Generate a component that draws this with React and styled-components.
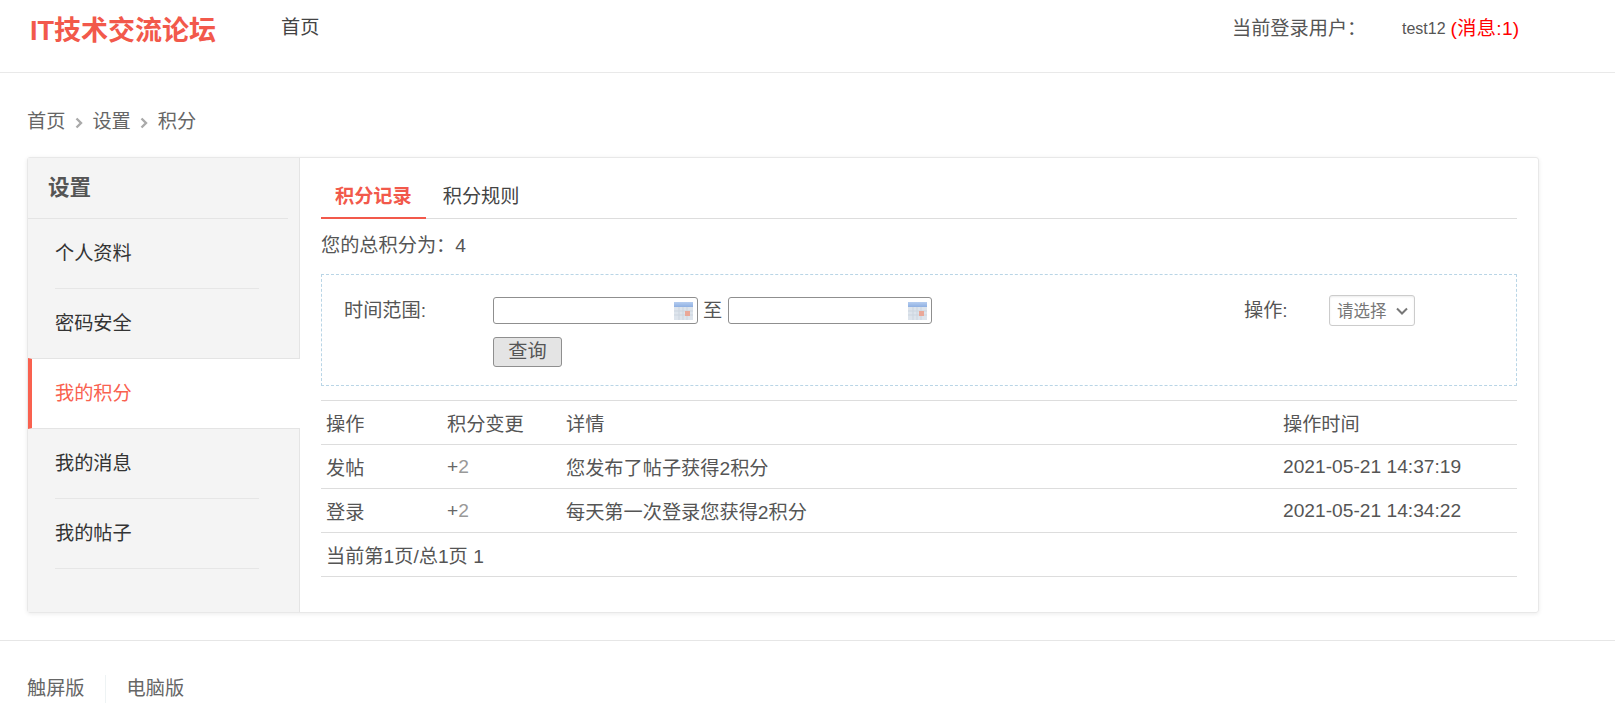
import React from 'react';
import styled, { createGlobalStyle } from 'styled-components';

const FONT = '"Liberation Sans", "Noto Sans CJK SC", sans-serif';
const RED = '#f2594b';

const Global = createGlobalStyle`
  html, body { margin: 0; padding: 0; background: #fff; overflow: hidden; }
  body { font-family: ${FONT}; font-size: 19.2px; color: #555; }
  * { box-sizing: border-box; }
`;

const S = {
  Header: styled.header`
    height: 73px;
    border-bottom: 1px solid #e9e9e9;
    display: flex;
    align-items: flex-start;
  `,
  Logo: styled.div`
    width: 281px;
    padding: 15px 0 0 30px;
    font-size: 27px;
    line-height: 32px;
    font-weight: 700;
    color: ${RED};
  `,
  Nav: styled.a`
    flex: 1;
    padding-top: 14px;
    font-size: 19.2px;
    line-height: 28px;
    color: #444;
  `,
  User: styled.div`
    width: 383px;
    padding-top: 15px;
    display: flex;
    line-height: 28px;
    font-size: 19.2px;
  `,
  UserLabel: styled.span`
    width: 170px;
  `,
  UserName: styled.span`
    font-size: 16px;
    margin-right: 5px;
  `,
  Message: styled.span`
    color: #f00;
    font-size: 19.2px;
    letter-spacing: 0.3px;
  `,
  Main: styled.main`
    padding: 0 76px 0 27px;
  `,
  Crumbs: styled.nav`
    height: 84px;
    padding-top: 35px;
    display: flex;
    align-items: flex-start;
    gap: 9.5px;
    line-height: 28px;
    color: #666;
  `,
  CrumbArrow: styled.svg`
    width: 8px;
    height: 12px;
    margin-top: 9px;
    fill: none;
    stroke: #aaa;
    stroke-width: 2.4;
  `,
  Card: styled.section`
    height: 456px;
    display: flex;
    border: 1px solid #e8e8e8;
    border-radius: 3px;
    box-shadow: 0 1px 4px rgba(0, 0, 0, 0.08);
  `,
  Side: styled.aside`
    width: 272px;
    flex: none;
    background: #f4f4f4;
    border-right: 1px solid #e4e4e4;
  `,
  SideTitle: styled.h3`
    margin: 0;
    width: 260px;
    height: 61px;
    padding-left: 20px;
    border-bottom: 1px solid #e4e4e4;
    font-size: 21.5px;
    font-weight: 700;
    line-height: 61px;
    color: #555;
  `,
  SideItem: styled.a`
    display: block;
    height: ${p => (p.$active ? '71px' : '70px')};
    margin-top: ${p => (p.$active ? '-1px' : 0)};
    margin-right: ${p => (p.$active ? '-1px' : 0)};
    padding-left: ${p => (p.$active ? '23px' : '27px')};
    background: ${p => (p.$active ? '#fff' : 'transparent')};
    border-left: ${p => (p.$active ? `4px solid #f9614f` : 0)};
    border-top: ${p => (p.$active ? '1px solid #e4e4e4' : 0)};
    border-bottom: ${p => (p.$active ? '1px solid #e4e4e4' : 0)};
    line-height: 69px;
    color: ${p => (p.$active ? '#f9614f' : '#333')};
    position: relative;
  `,
  SideLine: styled.div`
    margin-left: 27px;
    width: 204px;
    height: 1px;
    margin-top: -1px;
    background: ${p => (p.$hidden ? 'transparent' : '#e6e6e6')};
    position: relative;
  `,
  Content: styled.div`
    flex: 1;
    padding: 0 21px;
  `,
  Tabs: styled.div`
    height: 61px;
    display: flex;
    align-items: flex-end;
    border-bottom: 1px solid #ddd;
  `,
  Tab: styled.a`
    height: 61px;
    margin-bottom: -1px;
    padding: 22px ${p => (p.$active ? '14px' : '17px')} 0;
    line-height: 34px;
    font-weight: ${p => (p.$active ? 700 : 400)};
    font-size: 19.2px;
    color: ${p => (p.$active ? RED : '#444')};
    border-bottom: ${p => (p.$active ? `2px solid ${RED}` : 0)};
  `,
  Total: styled.p`
    margin: 0;
    height: 55px;
    line-height: 54px;
  `,
  Filter: styled.form`
    height: 112px;
    padding: 20px 22px;
    border: 1px dashed #b9d5e6;
    display: grid;
    grid-template-columns: 149px 751px 85px 1fr;
    grid-auto-rows: min-content;
    row-gap: 11px;
    align-items: center;
    line-height: 28px;
  `,
  Dates: styled.div`
    display: flex;
    align-items: center;
    gap: 5.5px;
  `,
  DateField: styled.div`
    width: 204.5px;
    height: 27px;
    display: flex;
    align-items: center;
    padding-right: 4px;
    border: 1px solid #8f8f8f;
    border-radius: 3px;
    background: #fff;
  `,
  DateInput: styled.input`
    flex: 1;
    min-width: 0;
    height: 100%;
    border: 0;
    outline: 0;
    background: transparent;
  `,
  Calendar: styled.svg`
    width: 19px;
    height: 20px;
    flex: none;
  `,
  Select: styled.div`
    width: 86px;
    height: 31px;
    display: flex;
    align-items: center;
    justify-content: space-between;
    padding: 0 6px 0 7px;
    border: 1px solid #ccc;
    border-radius: 3px;
    background: #fff;
    box-shadow: inset 0 1px 2px rgba(0, 0, 0, 0.08);
    font-size: 16.5px;
    color: #777;
  `,
  SelectArrow: styled.svg`
    width: 12px;
    height: 8px;
    fill: none;
    stroke: #777;
    stroke-width: 2;
  `,
  Query: styled.button`
    display: block;
    width: 69px;
    height: 30px;
    padding: 0;
    border: 1px solid #8f8f8f;
    border-radius: 3px;
    background: #e4e4e4;
    font: inherit;
    color: #555;
    line-height: 28px;
  `,
  Table: styled.table`
    width: 100%;
    margin-top: 14px;
    border-collapse: collapse;
    table-layout: fixed;
    border-top: 1px solid #ddd;
  `,
  Row: styled.tr`
    height: 44px;
    border-bottom: 1px solid #ddd;
  `,
  Col: styled.col`
    width: ${p => p.$w}px;
  `,
  Cell: styled.td`
    padding: 0 0 0 ${p => (p.$first ? '5px' : '6px')};
    font-size: 19.2px;
    font-weight: 400;
    text-align: left;
    white-space: nowrap;
  `,
  Plus: styled.span`
    color: #666;
  `,
  Two: styled.span`
    color: #999;
  `,
  Footer: styled.footer`
    margin-top: 27px;
    height: 64px;
    padding: 34px 0 0 27px;
    border-top: 1px solid #e6e6e6;
    display: flex;
    align-items: flex-start;
    line-height: 28px;
    color: #666;
  `,
  FootLink: styled.a`
    padding-right: ${p => (p.$first ? '20px' : 0)};
    margin-right: ${p => (p.$first ? '21px' : 0)};
    border-right: ${p => (p.$first ? '1px solid #eef3f4' : 0)};
  `,
};

const Arrow = () => (
  <S.CrumbArrow viewBox="0 0 8 12">
    <path d="M1.5 1.5 6 6l-4.5 4.5" />
  </S.CrumbArrow>
);

const CalendarIcon = () => (
  <S.Calendar viewBox="0 0 19 20">
    <defs>
      <linearGradient id="calHead" x1="0" y1="0" x2="0" y2="1">
        <stop offset="0" stopColor="#b5cdf0" />
        <stop offset="1" stopColor="#8fb0e2" />
      </linearGradient>
    </defs>
    <rect x="0" y="1" width="19" height="18" fill="#dde4ec" />
    <rect x="0" y="1" width="19" height="5" fill="url(#calHead)" />
    <path d="M5 6v13M9 6v13M13 6v13M0 10h19M0 14h19" stroke="#ccd5df" strokeWidth="1" />
    <rect x="11" y="10" width="5" height="5" fill="#eaa898" />
  </S.Calendar>
);

const menu = ['个人资料', '密码安全', '我的积分', '我的消息', '我的帖子'];

const rows = [
  ['发帖', '您发布了帖子获得2积分', '2021-05-21 14:37:19'],
  ['登录', '每天第一次登录您获得2积分', '2021-05-21 14:34:22'],
];

const App = () => (
  <>
    <Global />
    <S.Header>
      <S.Logo>IT技术交流论坛</S.Logo>
      <S.Nav>首页</S.Nav>
      <S.User>
        <S.UserLabel>当前登录用户：</S.UserLabel>
        <S.UserName>test12</S.UserName>
        <S.Message>(消息:1)</S.Message>
      </S.User>
    </S.Header>
    <S.Main>
      <S.Crumbs>
        <span>首页</span>
        <Arrow />
        <span>设置</span>
        <Arrow />
        <span>积分</span>
      </S.Crumbs>
      <S.Card>
        <S.Side>
          <S.SideTitle>设置</S.SideTitle>
          {menu.map((m, i) => (
            <React.Fragment key={m}>
              <S.SideItem $active={i === 2}>{m}</S.SideItem>
              <S.SideLine $hidden={i === 1 || i === 2} />
            </React.Fragment>
          ))}
        </S.Side>
        <S.Content>
          <S.Tabs>
            <S.Tab $active>积分记录</S.Tab>
            <S.Tab>积分规则</S.Tab>
          </S.Tabs>
          <S.Total>您的总积分为：4</S.Total>
          <S.Filter>
            <span>时间范围:</span>
            <S.Dates>
              <S.DateField>
                <S.DateInput />
                <CalendarIcon />
              </S.DateField>
              至
              <S.DateField>
                <S.DateInput />
                <CalendarIcon />
              </S.DateField>
            </S.Dates>
            <span>操作:</span>
            <S.Select>
              请选择
              <S.SelectArrow viewBox="0 0 12 8">
                <path d="M1 1.5 6 6.5l5-5" />
              </S.SelectArrow>
            </S.Select>
            <span />
            <div>
              <S.Query type="button">查询</S.Query>
            </div>
          </S.Filter>
          <S.Table>
            <colgroup>
              <S.Col $w={120} />
              <S.Col $w={119} />
              <S.Col $w={717} />
              <S.Col />
            </colgroup>
            <tbody>
              <S.Row>
                <S.Cell as="th" $first>操作</S.Cell>
                <S.Cell as="th">积分变更</S.Cell>
                <S.Cell as="th">详情</S.Cell>
                <S.Cell as="th">操作时间</S.Cell>
              </S.Row>
              {rows.map(r => (
                <S.Row key={r[2]}>
                  <S.Cell $first>{r[0]}</S.Cell>
                  <S.Cell><S.Plus>+</S.Plus><S.Two>2</S.Two></S.Cell>
                  <S.Cell>{r[1]}</S.Cell>
                  <S.Cell>{r[2]}</S.Cell>
                </S.Row>
              ))}
              <S.Row>
                <S.Cell colSpan={4} $first>当前第1页/总1页 1</S.Cell>
              </S.Row>
            </tbody>
          </S.Table>
        </S.Content>
      </S.Card>
    </S.Main>
    <S.Footer>
      <S.FootLink $first>触屏版</S.FootLink>
      <S.FootLink>电脑版</S.FootLink>
    </S.Footer>
  </>
);

export default App;
